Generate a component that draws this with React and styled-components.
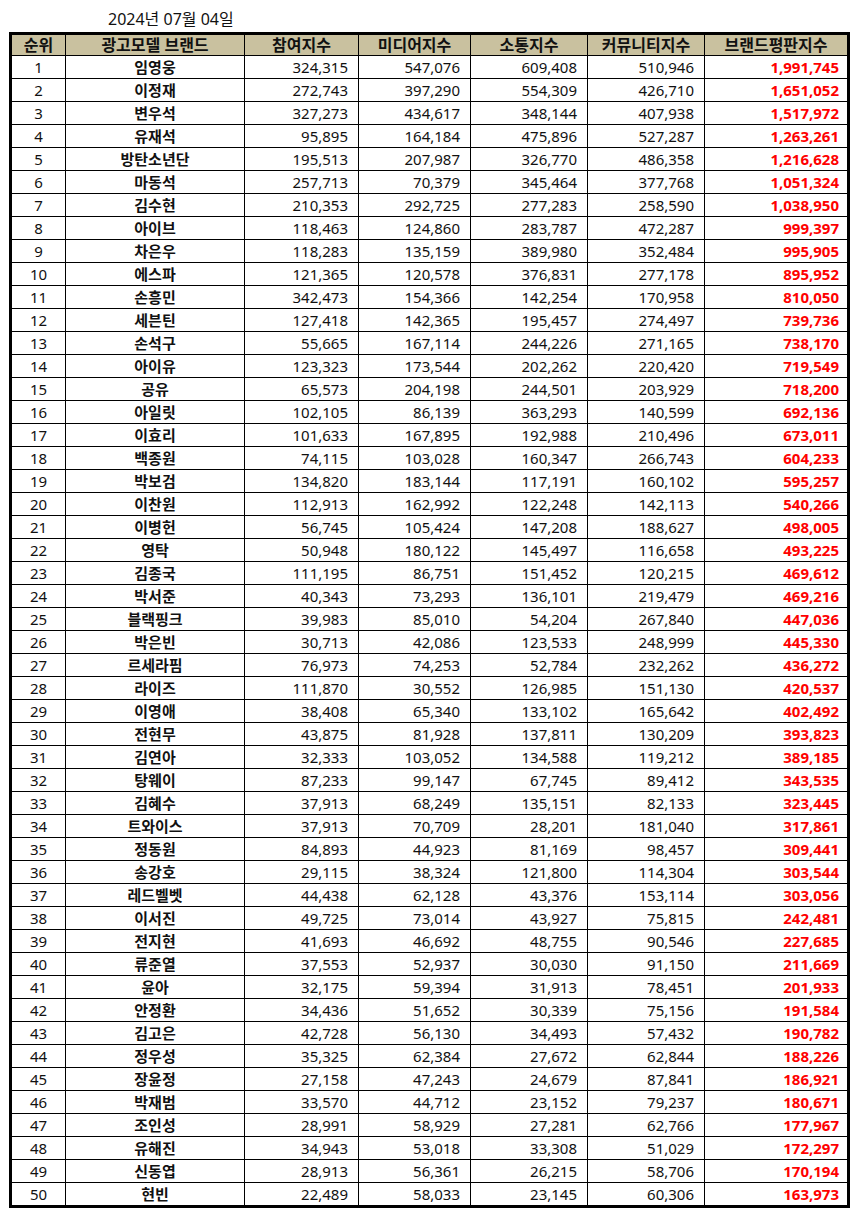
import { createGlobalStyle } from "styled-components";
import styled from "styled-components";

const GlobalStyle = createGlobalStyle`
  html, body {
    margin: 0;
    padding: 0;
    background: #ffffff;
  }
  body {
    font-family: "Noto Sans", "Noto Sans CJK KR", sans-serif;
    color: #000;
  }
`;

const Page = styled.div`
  width: 859px;
  height: 1215px;
  background: #fff;
`;

const DateLine = styled.div`
  height: 32px;
  box-sizing: border-box;
  padding-left: 108px;
  padding-top: 9px;
  font-size: 16px;
  line-height: 20px;
  color: #111;
`;

const Sheet = styled.div`
  margin-left: 9px;
  width: 841px;
  box-sizing: border-box;
  border: 3px solid #000;
`;

const Row = styled.div`
  display: grid;
  grid-template-columns: 54px 179px 114px 112px 117px 117px 142px;
  height: ${(p) => (p.$head ? 21 : p.$last ? 22 : 23)}px;
  box-sizing: border-box;
  border-bottom: ${(p) => (p.$last ? "none" : "1px solid #000")};
  background: ${(p) => (p.$head ? "#c9c19f" : "#fff")};
`;

const Cell = styled.div`
  box-sizing: border-box;
  border-right: 1px solid #000;
  display: flex;
  align-items: center;
  justify-content: ${(p) => (p.$align === "right" ? "flex-end" : "center")};
  padding-right: ${(p) => (p.$align === "right" ? "10px" : "0")};
  font-size: ${(p) => (p.$head ? 16 : 15)}px;
  line-height: 20px;
  font-weight: ${(p) => (p.$bold ? 700 : 400)};
  color: #111;
  white-space: nowrap;

  &:last-child {
    border-right: none;
    padding-right: ${(p) => (p.$align === "right" ? "8px" : "0")};
  }
`;

const Score = styled(Cell)`
  color: #ff0000;
  font-weight: 700;
`;

const headers = ["순위", "광고모델 브랜드", "참여지수", "미디어지수", "소통지수", "커뮤니티지수", "브랜드평판지수"];

const rows = [
  ["임영웅", "324,315", "547,076", "609,408", "510,946", "1,991,745"],
  ["이정재", "272,743", "397,290", "554,309", "426,710", "1,651,052"],
  ["변우석", "327,273", "434,617", "348,144", "407,938", "1,517,972"],
  ["유재석", "95,895", "164,184", "475,896", "527,287", "1,263,261"],
  ["방탄소년단", "195,513", "207,987", "326,770", "486,358", "1,216,628"],
  ["마동석", "257,713", "70,379", "345,464", "377,768", "1,051,324"],
  ["김수현", "210,353", "292,725", "277,283", "258,590", "1,038,950"],
  ["아이브", "118,463", "124,860", "283,787", "472,287", "999,397"],
  ["차은우", "118,283", "135,159", "389,980", "352,484", "995,905"],
  ["에스파", "121,365", "120,578", "376,831", "277,178", "895,952"],
  ["손흥민", "342,473", "154,366", "142,254", "170,958", "810,050"],
  ["세븐틴", "127,418", "142,365", "195,457", "274,497", "739,736"],
  ["손석구", "55,665", "167,114", "244,226", "271,165", "738,170"],
  ["아이유", "123,323", "173,544", "202,262", "220,420", "719,549"],
  ["공유", "65,573", "204,198", "244,501", "203,929", "718,200"],
  ["아일릿", "102,105", "86,139", "363,293", "140,599", "692,136"],
  ["이효리", "101,633", "167,895", "192,988", "210,496", "673,011"],
  ["백종원", "74,115", "103,028", "160,347", "266,743", "604,233"],
  ["박보검", "134,820", "183,144", "117,191", "160,102", "595,257"],
  ["이찬원", "112,913", "162,992", "122,248", "142,113", "540,266"],
  ["이병헌", "56,745", "105,424", "147,208", "188,627", "498,005"],
  ["영탁", "50,948", "180,122", "145,497", "116,658", "493,225"],
  ["김종국", "111,195", "86,751", "151,452", "120,215", "469,612"],
  ["박서준", "40,343", "73,293", "136,101", "219,479", "469,216"],
  ["블랙핑크", "39,983", "85,010", "54,204", "267,840", "447,036"],
  ["박은빈", "30,713", "42,086", "123,533", "248,999", "445,330"],
  ["르세라핌", "76,973", "74,253", "52,784", "232,262", "436,272"],
  ["라이즈", "111,870", "30,552", "126,985", "151,130", "420,537"],
  ["이영애", "38,408", "65,340", "133,102", "165,642", "402,492"],
  ["전현무", "43,875", "81,928", "137,811", "130,209", "393,823"],
  ["김연아", "32,333", "103,052", "134,588", "119,212", "389,185"],
  ["탕웨이", "87,233", "99,147", "67,745", "89,412", "343,535"],
  ["김혜수", "37,913", "68,249", "135,151", "82,133", "323,445"],
  ["트와이스", "37,913", "70,709", "28,201", "181,040", "317,861"],
  ["정동원", "84,893", "44,923", "81,169", "98,457", "309,441"],
  ["송강호", "29,115", "38,324", "121,800", "114,304", "303,544"],
  ["레드벨벳", "44,438", "62,128", "43,376", "153,114", "303,056"],
  ["이서진", "49,725", "73,014", "43,927", "75,815", "242,481"],
  ["전지현", "41,693", "46,692", "48,755", "90,546", "227,685"],
  ["류준열", "37,553", "52,937", "30,030", "91,150", "211,669"],
  ["윤아", "32,175", "59,394", "31,913", "78,451", "201,933"],
  ["안정환", "34,436", "51,652", "30,339", "75,156", "191,584"],
  ["김고은", "42,728", "56,130", "34,493", "57,432", "190,782"],
  ["정우성", "35,325", "62,384", "27,672", "62,844", "188,226"],
  ["장윤정", "27,158", "47,243", "24,679", "87,841", "186,921"],
  ["박재범", "33,570", "44,712", "23,152", "79,237", "180,671"],
  ["조인성", "28,991", "58,929", "27,281", "62,766", "177,967"],
  ["유해진", "34,943", "53,018", "33,308", "51,029", "172,297"],
  ["신동엽", "28,913", "56,361", "26,215", "58,706", "170,194"],
  ["현빈", "22,489", "58,033", "23,145", "60,306", "163,973"],
];

export default function App() {
  return (
    <Page>
      <GlobalStyle />
      <DateLine>2024년 07월 04일</DateLine>
      <Sheet>
        <Row $head>
          {headers.map((h) => (
            <Cell key={h} $head $bold>
              {h}
            </Cell>
          ))}
        </Row>
        {rows.map((r, i) => (
          <Row key={r[0]} $last={i === rows.length - 1}>
            <Cell>{i + 1}</Cell>
            <Cell $bold>{r[0]}</Cell>
            <Cell $align="right">{r[1]}</Cell>
            <Cell $align="right">{r[2]}</Cell>
            <Cell $align="right">{r[3]}</Cell>
            <Cell $align="right">{r[4]}</Cell>
            <Score $align="right">{r[5]}</Score>
          </Row>
        ))}
      </Sheet>
    </Page>
  );
}
